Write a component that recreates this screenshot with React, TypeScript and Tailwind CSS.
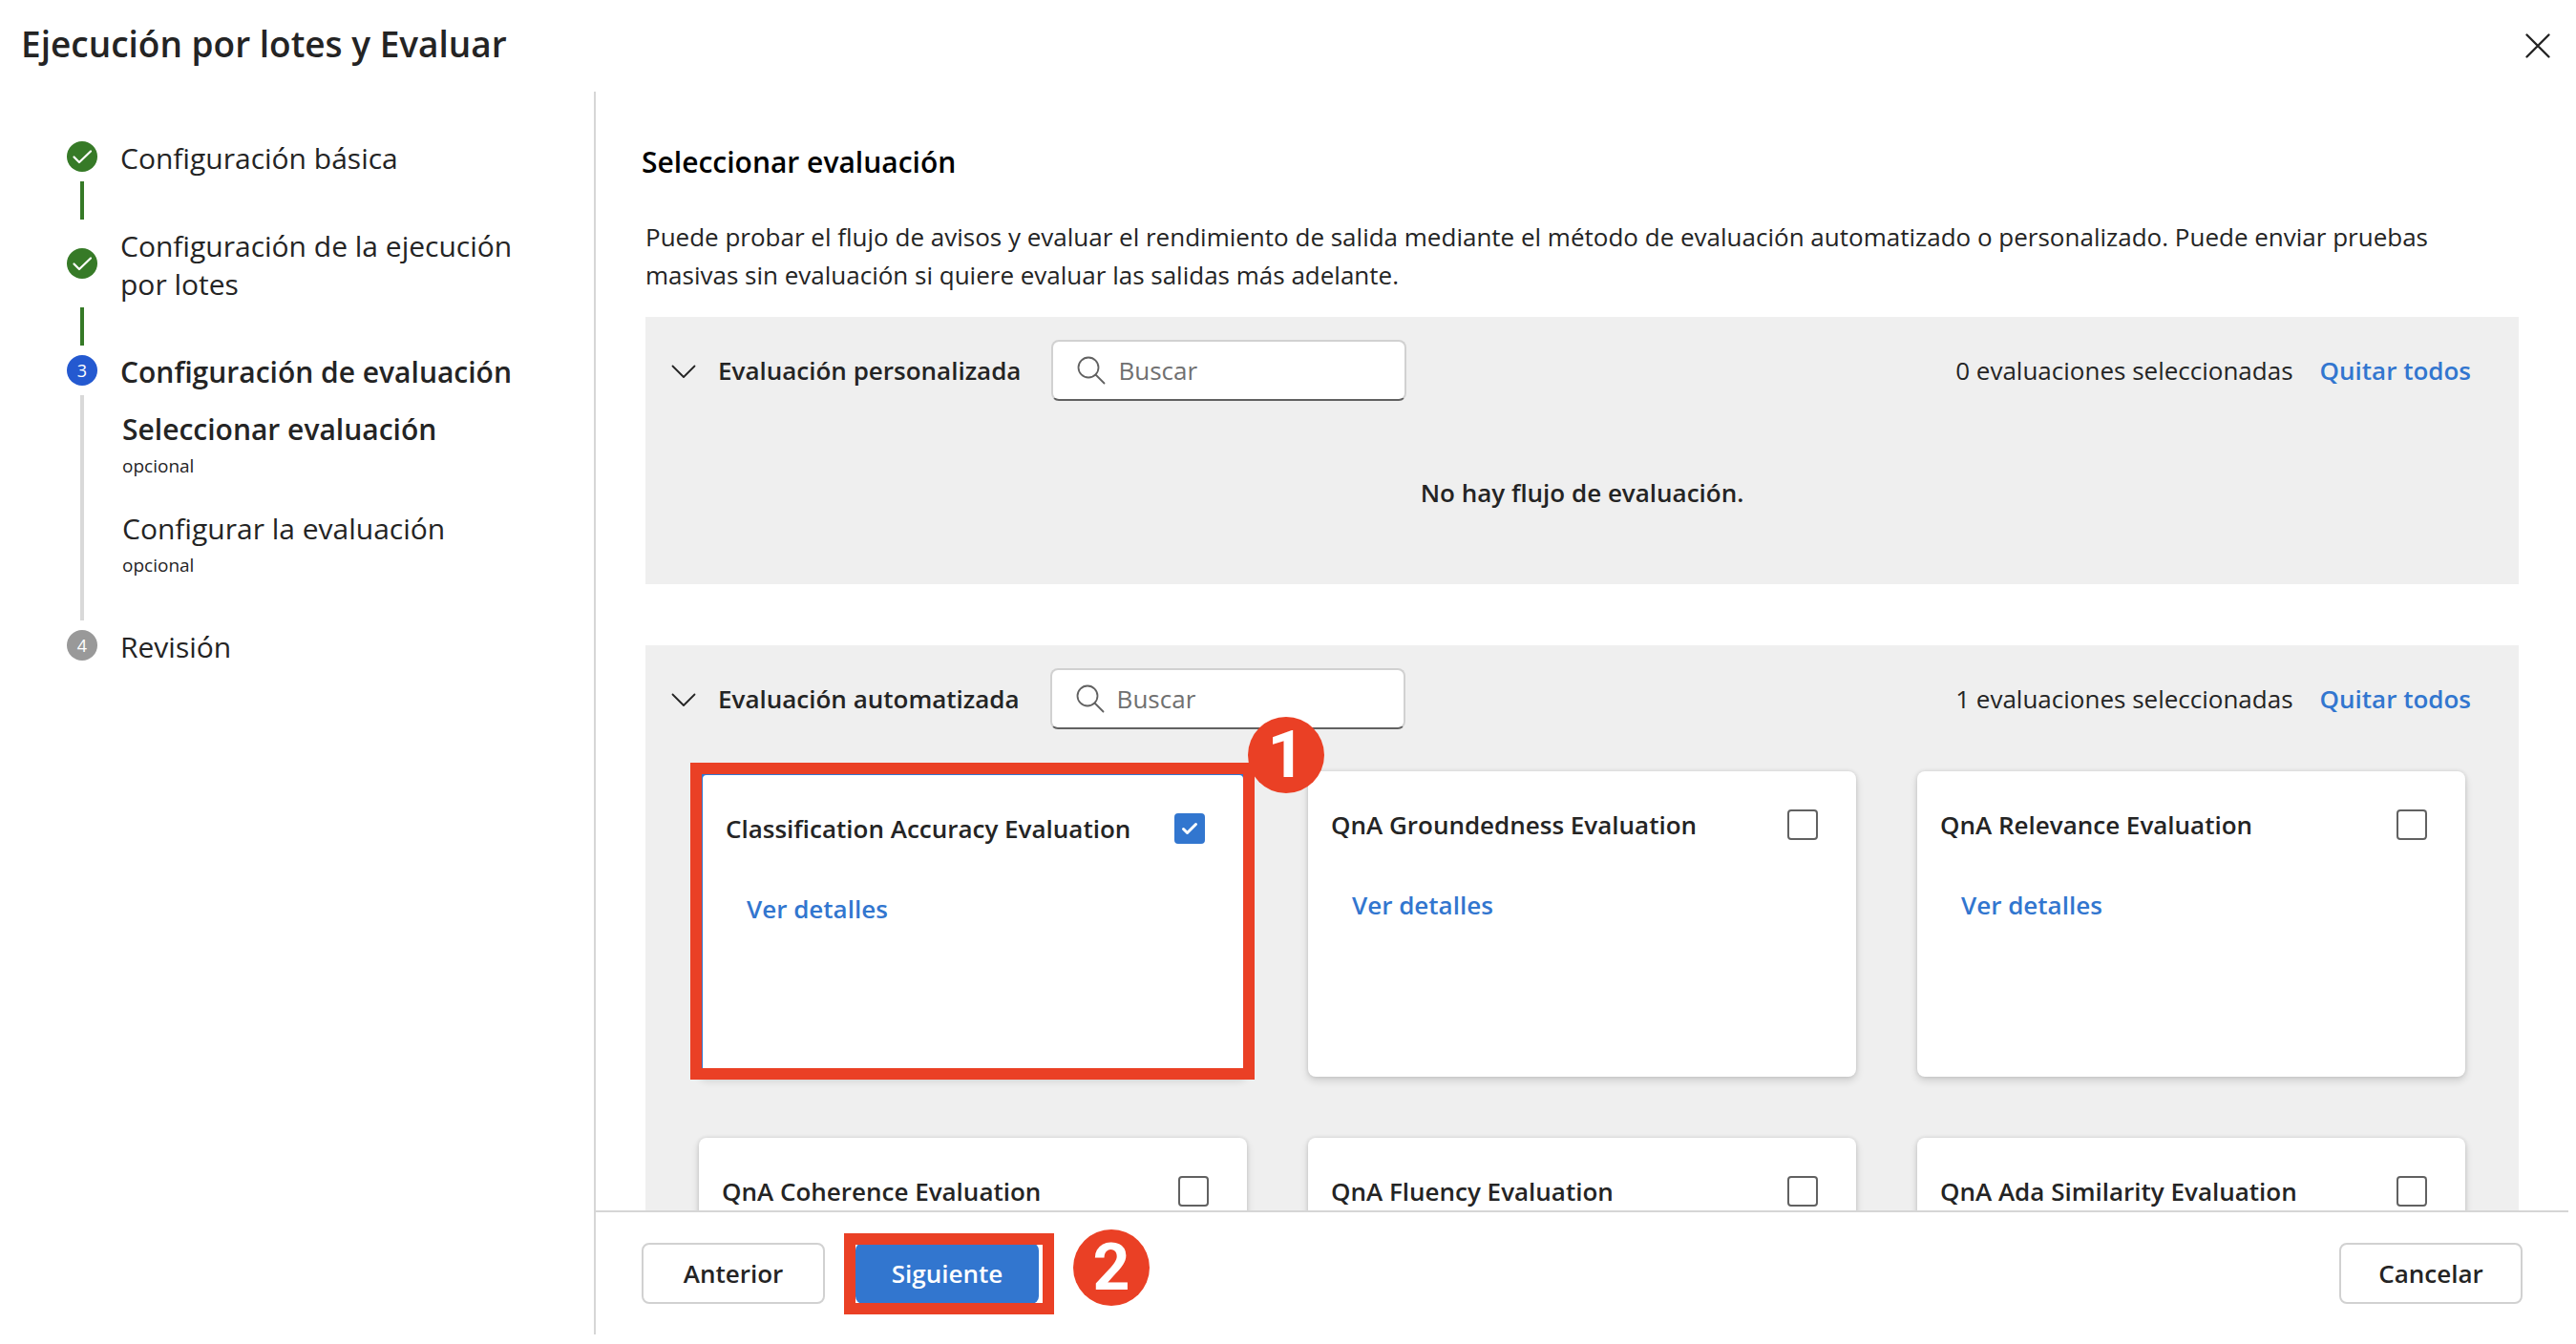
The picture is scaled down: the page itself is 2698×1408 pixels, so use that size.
import { useState, type ReactNode } from "react";

function Callout({ children }: { children: ReactNode }) {
  return (
    <span className="flex size-20 items-center justify-center rounded-full bg-[#ea4025] font-['Roboto','Liberation_Sans',sans-serif] text-[68px] leading-none font-bold text-white">
      {children}
    </span>
  );
}

function Bullet({ children, color }: { children: ReactNode; color: string }) {
  return <span className={`flex size-8 shrink-0 items-center justify-center rounded-full text-lg font-normal text-white ${color}`}>{children}</span>;
}

function DoneBullet() {
  return (
    <Bullet color="bg-[#367a27]">
      <svg viewBox="0 0 32 32" className="size-8" fill="none" stroke="currentColor" strokeWidth="2.2" strokeLinecap="round" strokeLinejoin="round" role="img" aria-label="Completado">
        <path d="M7.500 16.500l5.500 5.500L25 10.500" />
      </svg>
    </Bullet>
  );
}

function Steps() {
  return (
    <nav aria-label="Pasos" className="w-[622px] shrink-0 pt-12 pr-16 pl-[70px] text-[30px] leading-10">
      <ol>
        <li>
          <div className="flex h-10 items-center gap-6">
            <DoneBullet />
            <span className="pt-1">Configuración básica</span>
          </div>
          <div className="mt-1.5 ml-3.5 h-10 w-1 bg-[#367a27]" />
        </li>
        <li>
          <div className="mt-1.5 flex h-20 items-center gap-6">
            <DoneBullet />
            <span className="pt-1">Configuración de la ejecución por lotes</span>
          </div>
          <div className="mt-1.5 ml-3.5 h-10 w-1 bg-[#367a27]" />
        </li>
        <li aria-current="step">
          <div className="mt-1.5 flex h-10 items-center gap-6 font-semibold">
            <Bullet color="bg-[#2459d0]">3</Bullet>
            <span className="pt-1">Configuración de evaluación</span>
          </div>
          <div className="mt-1.5 ml-3.5 flex h-[236px] border-l-4 border-[#d9d9d9] pl-10">
            <ol className="flex flex-col gap-7 pt-4">
              <li>
                <div className="font-semibold">Seleccionar evaluación</div>
                <div className="text-[19px] leading-9">opcional</div>
              </li>
              <li>
                <div>Configurar la evaluación</div>
                <div className="text-[19px] leading-9">opcional</div>
              </li>
            </ol>
          </div>
        </li>
        <li>
          <div className="mt-1.5 flex h-10 items-center gap-6">
            <Bullet color="bg-[#999999]">4</Bullet>
            <span className="pt-1">Revisión</span>
          </div>
        </li>
      </ol>
    </nav>
  );
}

function PanelHeader({ title, count }: { title: string; count: number }) {
  return (
    <div className="flex items-center pr-[50px] pl-6">
      <button aria-label={`Contraer ${title}`} className="flex size-8 items-center justify-center">
        <svg viewBox="0 0 32 32" className="size-8" fill="none" stroke="#242424" strokeWidth="1.8" strokeLinecap="round" strokeLinejoin="round">
          <path d="M4.500 11.500L16 23l11.500-11.500" />
        </svg>
      </button>
      <h3 className="ml-5 font-semibold">{title}</h3>
      <label className="ml-8 flex h-16 w-[372px] items-center gap-3 rounded-lg border-2 border-[#d1d1d1] border-b-[#616161] bg-white pl-6">
        <svg viewBox="0 0 32 32" className="size-8 shrink-0" fill="none" stroke="#616161" strokeWidth="1.8" strokeLinecap="round" aria-hidden="true">
          <circle cx="13" cy="13" r="10.500" />
          <path d="M20.500 20.500l9 9" />
        </svg>
        <input type="search" aria-label={`Buscar en ${title}`} placeholder="Buscar" className="w-full min-w-0 bg-transparent outline-none placeholder:text-[#707070]" />
      </label>
      <span className="ml-auto">{count} evaluaciones seleccionadas</span>
      <button className="ml-7 font-semibold text-[#3276cf]">Quitar todos</button>
    </div>
  );
}

function Card({ name, checked, onToggle, marked }: { name: string; checked: boolean; onToggle: () => void; marked?: boolean }) {
  return (
    <div className={`relative h-80 rounded-lg bg-white shadow-[0_4px_8px_rgba(0,0,0,0.14),0_0_4px_rgba(0,0,0,0.12)] ${checked ? "border-4 border-[#3276cf]" : ""}`}>
      <div className="flex items-center justify-between pt-9 pr-10 pl-6">
        <label htmlFor={name} className="font-semibold">{name}</label>
        <span className="relative flex size-8">
          <input
            id={name}
            type="checkbox"
            checked={checked}
            onChange={onToggle}
            className="size-8 appearance-none rounded-sm border-2 border-[#616161] bg-white checked:border-[#3276cf] checked:bg-[#3276cf]"
          />
          {checked && (
            <svg viewBox="0 0 32 32" className="pointer-events-none absolute inset-0 size-8" fill="none" stroke="#fff" strokeWidth="3" strokeLinecap="round" strokeLinejoin="round" aria-hidden="true">
              <path d="M9.500 16.500l4 4 9-9" />
            </svg>
          )}
        </span>
      </div>
      <a href="#detalles" className="mt-11 ml-[46px] inline-block font-semibold text-[#3276cf]">Ver detalles</a>
      {marked && (
        <>
          <div className="pointer-events-none absolute -top-[13px] -right-3 -bottom-[7px] -left-[13px] border-12 border-[#ea4025]" />
          <div className="absolute -top-[61px] -right-[85px] z-10"><Callout>1</Callout></div>
        </>
      )}
    </div>
  );
}

const evaluations = [
  "Classification Accuracy Evaluation",
  "QnA Groundedness Evaluation",
  "QnA Relevance Evaluation",
  "QnA Coherence Evaluation",
  "QnA Fluency Evaluation",
  "QnA Ada Similarity Evaluation",
];

export default function App() {
  const [selected, setSelected] = useState<string[]>([evaluations[0]]);
  const toggle = (name: string) =>
    setSelected((list) => (list.includes(name) ? list.filter((n) => n !== name) : [...list, name]));

  return (
    <div className="flex h-screen flex-col overflow-hidden bg-white pr-2 pb-2.5 font-['Open_Sans','Noto_Sans',sans-serif] text-[26px] leading-10 text-[#242424]">
      <header className="flex h-24 shrink-0 items-center justify-between pr-4 pl-[22px]">
        <h1 className="pb-1 text-[37px] leading-[52px] font-semibold">Ejecución por lotes y Evaluar</h1>
        <button aria-label="Cerrar" className="flex size-8 items-center justify-center">
          <svg viewBox="0 0 32 32" className="size-8" fill="none" stroke="#242424" strokeWidth="2.400" strokeLinecap="round">
            <path d="M4.500 4.500l23 23M27.500 4.500l-23 23" />
          </svg>
        </button>
      </header>
      <div className="flex min-h-0 flex-1">
        <Steps />
        <div className="flex min-w-0 flex-1 flex-col border-l-2 border-[#d6d6d6]">
          <main className="min-h-0 flex-1 overflow-y-auto pt-[54px] pr-[52px] pl-[52px] [scrollbar-width:none]">
            <h2 className="-ml-1 text-[30px] leading-10 font-semibold text-black">Seleccionar evaluación</h2>
            <p className="mt-[38px]">
              Puede probar el flujo de avisos y evaluar el rendimiento de salida mediante el método de evaluación automatizado o personalizado. Puede enviar pruebas masivas sin evaluación si quiere evaluar las salidas más adelante.
            </p>
            <section className="mt-6 h-[280px] bg-[#efefef] pt-6">
              <PanelHeader title="Evaluación personalizada" count={0} />
              <p className="mt-[76px] text-center font-semibold">No hay flujo de evaluación.</p>
            </section>
            <section className="mt-16 bg-[#efefef] pt-6 pb-16">
              <PanelHeader title="Evaluación automatizada" count={selected.length} />
              <div className="mt-11 grid grid-cols-3 gap-16 px-14">
                {evaluations.map((name, i) => (
                  <Card key={name} name={name} checked={selected.includes(name)} onToggle={() => toggle(name)} marked={i === 0} />
                ))}
              </div>
            </section>
          </main>
          <footer className="flex h-[130px] shrink-0 items-center border-t-2 border-[#d6d6d6] pr-12 pl-12">
            <button className="h-16 w-48 rounded-lg border-2 border-[#d1d1d1] font-semibold">Anterior</button>
            <div className="relative ml-8">
              <button className="block h-16 w-48 rounded-lg bg-[#3276cf] font-semibold text-white">Siguiente</button>
              <div className="pointer-events-none absolute -top-2.5 -right-4 -bottom-[11px] -left-3 border-12 border-[#ea4025]" />
            </div>
            <div className="mb-3 ml-9"><Callout>2</Callout></div>
            <button className="ml-auto h-16 w-48 rounded-lg border-2 border-[#d1d1d1] font-semibold">Cancelar</button>
          </footer>
        </div>
      </div>
    </div>
  );
}
